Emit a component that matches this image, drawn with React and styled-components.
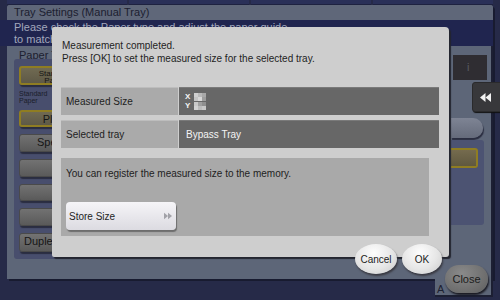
import React from 'react';
import styled, { createGlobalStyle } from 'styled-components';

const GlobalStyle = createGlobalStyle`
  html, body {
    margin: 0;
    padding: 0;
    background: #262a48;
  }
  body {
    font-family: "Liberation Sans", Arial, sans-serif;
  }
`;

const Screen = styled.div`
  position: relative;
  width: 500px;
  height: 300px;
  overflow: hidden;
  background: #262a48;
  display: flex;
  flex-direction: column;
`;

const TopTabs = styled.div`
  height: 5px;
  display: flex;
  gap: 2px;
  padding: 0 7px;
  div {
    flex: 1;
    background: #2a3058;
    border-bottom: 1px solid #1e2240;
  }
`;

/* dimmed window behind the dialog */
const Window = styled.div`
  margin-left: 7px;
  width: 486px;
  height: 274px;
  background: #5d6678;
  border-radius: 3px 3px 0 0;
  box-shadow: 2px 2px 0 #181b30;
  display: flex;
  flex-direction: column;
`;

const TitleBar = styled.div`
  height: 15px;
  padding-left: 7px;
  font-size: 11px;
  line-height: 15px;
  color: #1c2030;
  background: #5f6779;
  border-radius: 3px 3px 0 0;
`;

const Instruction = styled.div`
  height: 26px;
  margin-left: -7px;
  padding-left: 14px;
  background: #20254f;
  color: #a3a8bd;
  font-size: 11px;
  line-height: 12px;
  padding-top: 1px;
  box-sizing: border-box;
  width: 493px;
`;

const Body = styled.div`
  flex: 1;
  display: flex;
  justify-content: space-between;
  border-right: 2px solid #1c1f33;
`;

const LeftColumn = styled.div`
  display: flex;
  flex-direction: column;
  padding-left: 7px;
`;

const GroupLabel = styled.div`
  font-size: 11px;
  color: #1c2030;
  padding: 3px 0 0 5px;
  height: 10px;
`;

const TypePanel = styled.div`
  width: 110px;
  height: 200px;
  background: #484e6d;
  border-radius: 3px;
  padding: 7px 5px;
  box-sizing: border-box;
  display: flex;
  flex-direction: column;
  gap: 7px;
`;

const TypeButton = styled.div`
  height: ${p => p.h || 18}px;
  width: 72px;
  box-sizing: border-box;
  border-radius: 3px;
  border: ${p => (p.selected ? '2px solid #8f7d22' : '1px solid #4a4a4a')};
  background: ${p => (p.selected ? 'linear-gradient(#706a52, #5e5946)' : 'linear-gradient(#727272, #5a5a5a)')};
  box-shadow: 1px 2px 1px #2a2d40;
  color: #151515;
  font-size: ${p => (p.small ? 8 : 11)}px;
  line-height: ${p => (p.small ? 7 : 14)}px;
  text-align: ${p => (p.left ? 'left' : 'center')};
  padding-left: ${p => (p.left ? 4 : 0)}px;
  padding-top: ${p => (p.small ? 2 : 0)}px;
  white-space: nowrap;
`;

const SmallLabel = styled.div`
  font-size: 7px;
  line-height: 7px;
  color: #1a1d2a;
  margin: -2px 0 -1px;
`;

const RightColumn = styled.div`
  width: 40px;
  display: flex;
  flex-direction: column;
  padding-top: 9px;
`;

const InfoBox = styled.div`
  height: 25px;
  width: 34px;
  margin-left: 2px;
  background: #2f2d32;
  color: #5a5a62;
  font-size: 11px;
  line-height: 25px;
  padding-left: 14px;
  box-sizing: border-box;
`;

const PillButton = styled.div`
  margin-top: 38px;
  height: 20px;
  width: 32px;
  background: linear-gradient(#7e8494, #656b7b);
  border-radius: 0 10px 10px 0;
  box-shadow: 1px 2px 1px #2a2d40;
`;

const SubPanel = styled.div`
  margin-top: 2px;
  height: 85px;
  width: 33px;
  background: #4c5372;
  border-radius: 0 3px 3px 0;
  padding-top: 8px;
  box-sizing: border-box;
`;

const GoldButton = styled.div`
  height: 20px;
  width: 27px;
  box-sizing: border-box;
  border: 2px solid #8f7d22;
  border-left: none;
  border-radius: 0 3px 3px 0;
  background: linear-gradient(#756b4e, #5f583f);
`;

const BottomStrip = styled.div`
  display: flex;
  justify-content: flex-end;
  padding-right: 7px;
`;

const FooterTab = styled.div`
  width: 58px;
  height: 16px;
  background: #5d6678;
  border-right: 2px solid #1c1f33;
  box-shadow: 0 2px 0 #1c1f33;
  font-size: 11px;
  color: #1c2030;
  padding-left: 2px;
  line-height: 20px;
  box-sizing: border-box;
`;

/* overlay parts */
const BackTab = styled.div`
  position: absolute;
  left: 472px;
  top: 82px;
  width: 30px;
  height: 30px;
  background: #38383b;
  border: 1px solid #2a2a2c;
  border-radius: 3px 0 0 3px;
  box-shadow: 1px 1px 1px #111;
  display: flex;
  align-items: center;
  justify-content: center;
  padding-right: 4px;
  box-sizing: border-box;
`;

const CloseButton = styled.div`
  position: absolute;
  left: 445px;
  top: 265px;
  width: 43px;
  height: 28px;
  border-radius: 14px / 14px;
  background: radial-gradient(ellipse at 40% 30%, #8a8a8a, #6c6c6c 70%, #5c5c5c);
  box-shadow: 1px 2px 2px #1a1a22;
  font-size: 11px;
  color: #1c1c1c;
  display: flex;
  align-items: center;
  justify-content: center;
`;

const Dialog = styled.div`
  position: absolute;
  left: 52px;
  top: 27px;
  width: 397px;
  height: 230px;
  box-sizing: border-box;
  background: #cecece;
  border-radius: 2px 4px 3px 2px;
  box-shadow: 2px 2px 1px #23252f;
  padding: 12px 10px 0 9px;
  color: #1e1e1e;
`;

const Message = styled.div`
  font-size: 10px;
  line-height: 13px;
  padding-left: 1px;
`;

const Rows = styled.div`
  margin-top: 22px;
  display: flex;
  flex-direction: column;
  gap: 5px;
`;

const Row = styled.div`
  display: grid;
  grid-template-columns: 117px 1fr;
  gap: 1px;
  height: ${p => p.h}px;
`;

const LabelCell = styled.div`
  background: #aaaaaa;
  font-size: 10px;
  display: flex;
  align-items: center;
  padding-left: 5px;
  border-top: 1px solid #bdbdbd;
`;

const ValueCell = styled.div`
  background: #676767;
  color: #f4f4f4;
  font-size: 10px;
  display: flex;
  align-items: center;
  padding-left: 7px;
  border-top: 1px solid #7a7a7a;
`;

const AxisList = styled.div`
  display: flex;
  flex-direction: column;
  gap: 1px;
  margin-left: -1px;
`;

const Axis = styled.div`
  display: flex;
  align-items: center;
  gap: 3px;
  font-size: 8px;
  font-weight: bold;
  line-height: 8px;
  b {
    width: 6px;
  }
`;

const Mosaic = styled.div`
  display: grid;
  grid-template-columns: repeat(3, 4px);
  grid-auto-rows: 4px;
`;

const MemoryPanel = styled.div`
  margin-top: 10px;
  width: 368px;
  height: 78px;
  background: #a9a9a9;
  box-sizing: border-box;
  padding: 9px 5px 0;
  display: flex;
  flex-direction: column;
  font-size: 10px;
  line-height: 13px;
`;

const StoreButton = styled.div`
  margin-top: 22px;
  width: 110px;
  height: 28px;
  box-sizing: border-box;
  border-radius: 4px;
  background: linear-gradient(#f6f5f8, #e6e5ea 60%, #dcdbe1);
  box-shadow: 1px 2px 1px #6d6d6d;
  display: flex;
  align-items: center;
  justify-content: space-between;
  padding: 0 4px 0 3px;
  font-size: 10px;
  color: #1e1e1e;
`;

const DialogButtons = styled.div`
  position: absolute;
  right: 7px;
  bottom: -17px;
  display: flex;
  gap: 5px;
`;

const RoundButton = styled.div`
  width: ${p => p.w}px;
  height: 30px;
  border-radius: 50% / 50%;
  background: radial-gradient(ellipse at 45% 30%, #fdfdfd, #e6e6e6 55%, #c9c9c9);
  box-shadow: 1px 2px 2px #3a3a42;
  display: flex;
  align-items: center;
  justify-content: center;
  font-size: 10px;
  color: #1c1c1c;
`;

const DoubleArrow = ({ dir = 'right', color, size = 8 }) => (
  <svg width={size} height={size} viewBox="0 0 10 10">
    <g fill={color} transform={dir === 'left' ? 'translate(10,0) scale(-1,1)' : undefined}>
      <polygon points="0,1 5,5 0,9" />
      <polygon points="5,1 10,5 5,9" />
    </g>
  </svg>
);

const blocksX = ['#cfcfcf', '#b9b9b9', '#a8a8a8', '#c4c4c4', '#d8d8d8', '#9d9d9d'];
const blocksY = ['#c9c9c9', '#a0a0a0', '#8f8f8f', '#d2d2d2', '#bcbcbc', '#c8c8c8'];

const Pixelated = ({ cells }) => (
  <Mosaic>
    {cells.map((c, i) => (
      <span key={i} style={{ background: c }} />
    ))}
  </Mosaic>
);

const App = () => {
  return (
    <>
      <GlobalStyle />
      <Screen>
        <TopTabs>
          <div />
          <div />
          <div />
          <div />
        </TopTabs>
        <Window>
          <TitleBar>Tray Settings (Manual Tray)</TitleBar>
          <Instruction>
            Please check the Paper type and adjust the paper guide
            <br />
            to match the paper size.
          </Instruction>
          <Body>
            <LeftColumn>
              <GroupLabel>Paper Type</GroupLabel>
              <TypePanel>
                <TypeButton selected h={19} small>
                  Standard
                  <br />
                  Paper
                </TypeButton>
                <SmallLabel>
                  Standard
                  <br />
                  Paper
                </SmallLabel>
                <TypeButton selected h={17}>Plain</TypeButton>
                <TypeButton h={18}>Special</TypeButton>
                <TypeButton h={18} />
                <TypeButton h={18} />
                <TypeButton h={18} />
                <TypeButton h={19} left>Duplex</TypeButton>
              </TypePanel>
            </LeftColumn>
            <RightColumn>
              <InfoBox>i</InfoBox>
              <PillButton />
              <SubPanel>
                <GoldButton />
              </SubPanel>
            </RightColumn>
          </Body>
        </Window>
        <BottomStrip>
          <FooterTab>A</FooterTab>
        </BottomStrip>

        <BackTab>
          <DoubleArrow dir="left" color="#f2f2f2" size={11} />
        </BackTab>
        <CloseButton>Close</CloseButton>

        <Dialog>
          <Message>
            Measurement completed.
            <br />
            Press [OK] to set the measured size for the selected tray.
          </Message>
          <Rows>
            <Row h={28}>
              <LabelCell>Measured Size</LabelCell>
              <ValueCell>
                <AxisList>
                  <Axis>
                    <b>X</b>
                    <Pixelated cells={blocksX} />
                  </Axis>
                  <Axis>
                    <b>Y</b>
                    <Pixelated cells={blocksY} />
                  </Axis>
                </AxisList>
              </ValueCell>
            </Row>
            <Row h={28}>
              <LabelCell>Selected tray</LabelCell>
              <ValueCell>Bypass Tray</ValueCell>
            </Row>
          </Rows>
          <MemoryPanel>
            You can register the measured size to the memory.
            <StoreButton>
              Store Size
              <DoubleArrow color="#a2a2a8" size={8} />
            </StoreButton>
          </MemoryPanel>
          <DialogButtons>
            <RoundButton w={42}>Cancel</RoundButton>
            <RoundButton w={40}>OK</RoundButton>
          </DialogButtons>
        </Dialog>
      </Screen>
    </>
  );
};

export default App;
